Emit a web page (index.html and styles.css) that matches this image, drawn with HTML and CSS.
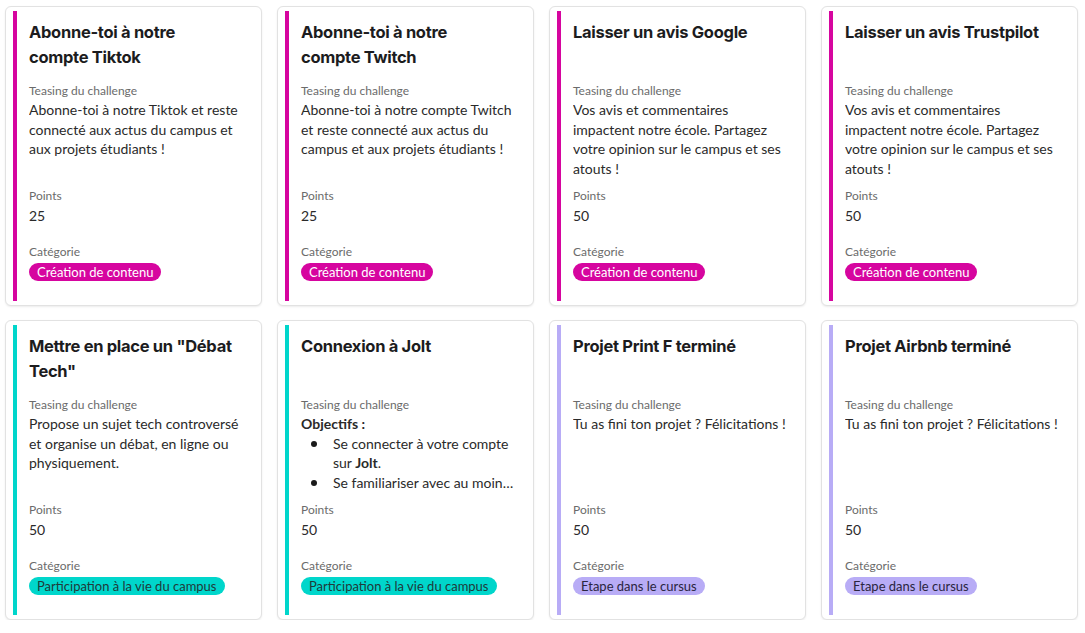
FILE: index.html
```html
<!DOCTYPE html>
<html lang="fr">
<head>
<meta charset="utf-8">
<title>Challenges</title>
<link rel="stylesheet" href="styles.css">
</head>
<body>
<div class="grid">
  <div class="card">
    <div class="inner pink">
      <h3 class="title">Abonne-toi à notre compte Tiktok</h3>
      <div class="label">Teasing du challenge</div>
      <div class="desc">Abonne-toi à notre Tiktok et reste connecté aux actus du campus et aux projets étudiants !</div>
      <div class="label">Points</div>
      <div class="value">25</div>
      <div class="label">Catégorie</div>
      <span class="badge b-pink">Création de contenu</span>
    </div>
  </div>
  <div class="card">
    <div class="inner pink">
      <h3 class="title">Abonne-toi à notre compte Twitch</h3>
      <div class="label">Teasing du challenge</div>
      <div class="desc">Abonne-toi à notre compte Twitch et reste connecté aux actus du campus et aux projets étudiants !</div>
      <div class="label">Points</div>
      <div class="value">25</div>
      <div class="label">Catégorie</div>
      <span class="badge b-pink">Création de contenu</span>
    </div>
  </div>
  <div class="card">
    <div class="inner pink">
      <h3 class="title">Laisser un avis Google</h3>
      <div class="label">Teasing du challenge</div>
      <div class="desc">Vos avis et commentaires impactent notre école. Partagez votre opinion sur le campus et ses atouts !</div>
      <div class="label">Points</div>
      <div class="value">50</div>
      <div class="label">Catégorie</div>
      <span class="badge b-pink">Création de contenu</span>
    </div>
  </div>
  <div class="card">
    <div class="inner pink">
      <h3 class="title">Laisser un avis Trustpilot</h3>
      <div class="label">Teasing du challenge</div>
      <div class="desc">Vos avis et commentaires impactent notre école. Partagez votre opinion sur le campus et ses atouts !</div>
      <div class="label">Points</div>
      <div class="value">50</div>
      <div class="label">Catégorie</div>
      <span class="badge b-pink">Création de contenu</span>
    </div>
  </div>

  <div class="card">
    <div class="inner cyan">
      <h3 class="title">Mettre en place un "Débat Tech"</h3>
      <div class="label">Teasing du challenge</div>
      <div class="desc">Propose un sujet tech controversé et organise un débat, en ligne ou physiquement.</div>
      <div class="label">Points</div>
      <div class="value">50</div>
      <div class="label">Catégorie</div>
      <span class="badge b-cyan">Participation à la vie du campus</span>
    </div>
  </div>
  <div class="card">
    <div class="inner cyan">
      <h3 class="title">Connexion à Jolt</h3>
      <div class="label">Teasing du challenge</div>
      <div class="desc">
        <strong>Objectifs :</strong>
        <ul class="list">
          <li>Se connecter à votre compte sur <strong>Jolt</strong>.</li>
          <li><span class="clip">Se familiariser avec au moins une fonctionnalité</span></li>
        </ul>
      </div>
      <div class="label">Points</div>
      <div class="value">50</div>
      <div class="label">Catégorie</div>
      <span class="badge b-cyan">Participation à la vie du campus</span>
    </div>
  </div>
  <div class="card">
    <div class="inner lav">
      <h3 class="title">Projet Print F terminé</h3>
      <div class="label">Teasing du challenge</div>
      <div class="desc">Tu as fini ton projet ? Félicitations !</div>
      <div class="label">Points</div>
      <div class="value">50</div>
      <div class="label">Catégorie</div>
      <span class="badge b-lav">Etape dans le cursus</span>
    </div>
  </div>
  <div class="card">
    <div class="inner lav">
      <h3 class="title">Projet Airbnb terminé</h3>
      <div class="label">Teasing du challenge</div>
      <div class="desc">Tu as fini ton projet ? Félicitations !</div>
      <div class="label">Points</div>
      <div class="value">50</div>
      <div class="label">Catégorie</div>
      <span class="badge b-lav">Etape dans le cursus</span>
    </div>
  </div>
</div>
</body>
</html>
```
FILE: styles.css
```css
* { box-sizing: border-box; }
html, body { margin: 0; padding: 0; background: #fff; }
body {
  font-family: "Lato", "Noto Sans", sans-serif;
  color: #222;
}
.grid {
  display: grid;
  grid-template-columns: repeat(4, 257px);
  column-gap: 15px;
  row-gap: 14px;
  padding: 6px 8px 0 5px;
}
.card {
  background: #fff;
  border: 1px solid #e2e2e2;
  border-radius: 6px;
  box-shadow: 0 1px 2px rgba(0,0,0,0.08);
  height: 300px;
  padding: 4px 8px 4px 7px;
}
.inner {
  height: 100%;
  border-left: 4px solid #d6059f;
  padding: 8px 8px 0 12px;
  display: flex;
  flex-direction: column;
  align-items: flex-start;
}
.inner.pink { border-left-color: #d6059f; }
.inner.cyan { border-left-color: #00d6cb; }
.inner.lav { border-left-color: #b8acf6; }
.title {
  font-family: "Inter", "Liberation Sans", sans-serif;
  font-weight: 700;
  font-size: 16.5px;
  line-height: 25px;
  letter-spacing: -0.3px;
  color: #1c1c1e;
  margin: 1px 0 12px 0;
  height: 50px;
  max-width: 206px;
}
.label {
  font-size: 12px;
  line-height: 18px;
  color: #6b6b6b;
}
.desc {
  font-size: 14px;
  line-height: 19.7px;
  color: #2a2a2a;
  height: 80px;
  overflow: hidden;
  margin-bottom: 7px;
  width: 100%;
}
.desc strong { font-weight: 700; }
.list {
  margin: 0;
  padding-left: 32px;
  list-style: none;
}
.list li { position: relative; }
.list li::before {
  content: "";
  position: absolute;
  left: -22px;
  top: 7px;
  width: 6px;
  height: 6px;
  border-radius: 50%;
  background: #1a1a1a;
}
.clip {
  display: block;
  white-space: nowrap;
  overflow: hidden;
  text-overflow: ellipsis;
}
.value {
  font-size: 14px;
  line-height: 20px;
  margin-top: 1px;
  margin-bottom: 17px;
  color: #2a2a2a;
}
.badge {
  display: inline-block;
  margin-top: 2px;
  font-size: 13px;
  line-height: 18px;
  padding: 0 8px;
  border-radius: 9px;
  white-space: nowrap;
}
.b-pink { background: #d6059f; color: #fff; }
.b-cyan { background: #00d6cb; color: #1f3a3a; }
.b-lav { background: #b8acf6; color: #2a2540; }
```
